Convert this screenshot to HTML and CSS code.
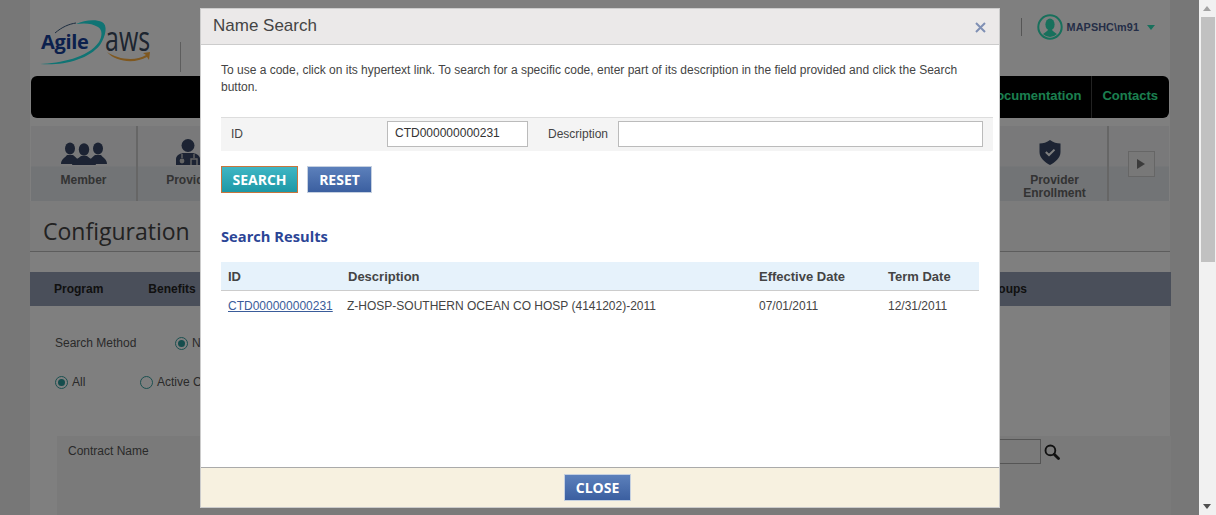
FILE: index.html
```html
<!DOCTYPE html>
<html lang="en">
<head>
    <meta charset="UTF-8">
    <title>Configuration - Name Search</title>
    <link rel="stylesheet" href="styles.css">
</head>
<body>
    <div class="window">
        <div class="page">
            <div class="top-bar">
                <div class="logo">
                    <svg class="logo-swoosh" width="74" height="50" viewBox="0 0 74 50">
                        <path d="M4 48 C24 47 52 42 63 26 C66 21 67 14 62 11 C56 7 48 7 40 8 C48 4 60 3 66 6 C72 9 70 20 64 29 C52 44 26 50 4 48 Z" fill="#20e8e8"/>
                        <path d="M19 17 C26 11 33 8 40 7" stroke="#3a5a80" stroke-width="1" fill="none"/>
                    </svg>
                    <span class="logo-agile">Agile</span>
                    <span class="logo-aws">aws</span>
                    <svg class="logo-smile" width="46" height="14" viewBox="0 0 46 14">
                        <path d="M2 2 C12 9 30 12 41 5 L38 3 L45 2 L44 10 L42 7 C30 14 10 12 2 2 Z" fill="#ffb040"/>
                    </svg>
                </div>
                <div class="logo-divider"></div>
                <div class="user-box">
                    <div class="user-divider"></div>
                    <svg class="user-icon" width="26" height="26" viewBox="0 0 26 26">
                        <clipPath id="userClip"><circle cx="13" cy="13" r="10"/></clipPath>
                        <circle cx="13" cy="13" r="11.7" fill="none" stroke="#30e0b8" stroke-width="2"/>
                        <g clip-path="url(#userClip)" fill="#30e0b8">
                            <ellipse cx="13" cy="10.5" rx="4.6" ry="6"/>
                            <path d="M3 26 C4 19 9 19 11 16 L15 16 C17 19 22 19 23 26 Z"/>
                        </g>
                    </svg>
                    <span class="user-name">MAPSHC\m91</span>
                    <span class="user-caret"></span>
                </div>
            </div>

            <nav class="main-nav">
                <a class="main-link">Documentation</a>
                <a class="main-link">Contacts</a>
            </nav>

            <div class="tabs">
                <div class="tab">
                    <div class="tab-icon">
                        <svg width="46" height="24" viewBox="0 0 46 24" fill="#384766">
                            <ellipse cx="9" cy="6.5" rx="5" ry="6"/>
                            <path d="M0 22 C0 17 4 16 6 13 L12 13 C14 15 16 16 17 18 L14 22 Z"/>
                            <ellipse cx="37" cy="6.5" rx="5" ry="6"/>
                            <path d="M46 22 C46 17 42 16 40 13 L34 13 C32 15 30 16 29 18 L32 22 Z"/>
                            <ellipse cx="23" cy="7.5" rx="5.2" ry="6.2"/>
                            <path d="M11 23 C12 18 17 17 20 14 L26 14 C29 17 34 18 35 23 Z"/>
                        </svg>
                    </div>
                    <div class="tab-label">Member</div>
                </div>
                <div class="tab tab-provider">
                    <div class="tab-icon">
                        <svg width="26" height="27" viewBox="0 0 26 27" fill="#384766">
                            <circle cx="13" cy="6.5" r="6.5"/>
                            <path d="M1 26 L1 20 C1 16 6 14 9 14 L17 14 C20 14 25 16 25 20 L25 26 Z"/>
                            <path d="M7 15 L7 19 M19 15 L19 19 M16 26 L16 20 L22 20 L22 26" stroke="#c8c8c8" stroke-width="1.4" fill="none"/>
                            <circle cx="7" cy="22" r="2.4" fill="#c8c8c8"/>
                        </svg>
                    </div>
                    <div class="tab-label">Provider</div>
                </div>
                <div class="tab-fill"></div>
                <div class="tab tab-enroll">
                    <div class="tab-icon">
                        <svg width="22" height="25" viewBox="0 0 22 25">
                            <path d="M11 0 C14 2.5 18 3.5 21.5 3.5 L21.5 12 C21.5 18 16 22.5 11 25 C6 22.5 0.5 18 0.5 12 L0.5 3.5 C4 3.5 8 2.5 11 0 Z" fill="#384766"/>
                            <path d="M6.8 12 L10 15 L15.5 9.6" stroke="#fff" stroke-width="2" fill="none"/>
                        </svg>
                    </div>
                    <div class="tab-label">Provider Enrollment</div>
                </div>
                <div class="tab-arrow">
                    <button class="arrow-btn"><span class="arrow-shape"></span></button>
                </div>
            </div>

            <div class="title-band">
                <h1>Configuration</h1>
            </div>

            <div class="sub-nav">
                <a>Program</a>
                <a>Benefits</a>
                <span class="sub-nav-end">Groups</span>
            </div>

            <div class="search-method">
                <span class="method-label">Search Method</span>
                <label class="radio-item"><span class="radio checked"></span>Name</label>
            </div>
            <div class="status-row">
                <label class="radio-item status-all"><span class="radio checked"></span>All</label>
                <label class="radio-item"><span class="radio"></span>Active Contracts</label>
            </div>

            <div class="contract-panel">
                <span class="contract-label">Contract Name</span>
                <div class="contract-search">
                    <div class="contract-input"></div>
                    <svg width="16" height="16" viewBox="0 0 17 17">
                        <circle cx="6.8" cy="6.8" r="5.2" fill="none" stroke="#222" stroke-width="2"/>
                        <path d="M10.8 10.8 L15.4 15.4" stroke="#222" stroke-width="3" stroke-linecap="round"/>
                    </svg>
                </div>
            </div>
        </div>
        <div class="overlay"></div>

        <div class="modal">
            <div class="modal-head">
                <span class="modal-title">Name Search</span>
                <svg class="modal-close" width="11" height="11" viewBox="0 0 11 11">
                    <path d="M1 1 L10 10 M10 1 L1 10" stroke="#7f90b4" stroke-width="2"/>
                </svg>
            </div>
            <div class="modal-body">
                <p class="hint">To use a code, click on its hypertext link. To search for a specific code, enter part of its description in the field provided and click the Search button.</p>
                <div class="filter-row">
                    <span class="filter-id">ID</span>
                    <input class="field field-id" type="text" value="CTD000000000231">
                    <span class="filter-desc">Description</span>
                    <input class="field field-desc" type="text">
                </div>
                <div class="btn-row">
                    <button class="btn btn-search">SEARCH</button>
                    <button class="btn btn-blue">RESET</button>
                </div>
                <h2 class="results-title">Search Results</h2>
                <table class="results">
                    <thead>
                        <tr>
                            <th class="col-id">ID</th>
                            <th class="col-desc">Description</th>
                            <th class="col-eff">Effective Date</th>
                            <th class="col-term">Term Date</th>
                        </tr>
                    </thead>
                    <tbody>
                        <tr>
                            <td><a href="#">CTD000000000231</a></td>
                            <td class="cell-desc">Z-HOSP-SOUTHERN OCEAN CO HOSP (4141202)-2011</td>
                            <td>07/01/2011</td>
                            <td>12/31/2011</td>
                        </tr>
                    </tbody>
                </table>
            </div>
            <div class="modal-foot">
                <button class="btn btn-blue btn-close">CLOSE</button>
            </div>
        </div>

        <div class="scrollbar">
            <div class="scroll-up"></div>
            <div class="scroll-thumb"></div>
            <div class="scroll-down"></div>
        </div>
    </div>
</body>
</html>
```

FILE: styles.css
```css
html, body {
    margin: 0;
    height: 100%;
    overflow: hidden;
}
body {
    font-family: "Liberation Sans", Arial, sans-serif;
    font-size: 12px;
    color: #333;
}
.window {
    position: relative;
    height: 515px;
    overflow: hidden;
}
.page {
    width: 1199px;
    height: 515px;
    box-sizing: border-box;
    margin-right: 17px;
    padding: 0 29px 0 30px;
    background-color: #eee;
    overflow: hidden;
    background-image: linear-gradient(#fff, #fff);
    background-size: 1140px 100%;
    background-position: 30px 0;
    background-repeat: no-repeat;
}
.overlay {
    position: absolute;
    left: 0;
    top: 0;
    width: 1199px;
    height: 515px;
    background-color: rgba(0, 0, 0, 0.5);
}

/* header */
.top-bar {
    height: 76px;
    display: flex;
    align-items: flex-start;
}
.logo {
    position: relative;
    width: 150px;
    height: 76px;
}
.logo-swoosh {
    position: absolute;
    left: 6px;
    top: 16px;
}
.logo-agile {
    position: absolute;
    left: 11px;
    top: 28px;
    font-family: "Open Sans", sans-serif;
    font-size: 20px;
    font-weight: 700;
    letter-spacing: -0.3px;
    color: #16409a;
}
.logo-aws {
    position: absolute;
    left: 75px;
    top: 20px;
    font-family: "Open Sans", sans-serif;
    font-size: 25px;
    color: #3a4a60;
    transform: scaleY(1.35);
}
.logo-smile {
    position: absolute;
    left: 75px;
    top: 50px;
}
.logo-divider {
    width: 1px;
    height: 30px;
    margin-top: 42px;
    background-color: #bbb;
}
.user-box {
    margin-left: auto;
    margin-top: 14px;
    padding-right: 15px;
    display: flex;
    align-items: center;
    height: 26px;
}
.user-divider {
    width: 1px;
    height: 18px;
    margin-right: 15px;
    background-color: #aaa;
}
.user-name {
    margin-left: 4px;
    font-size: 10.8px;
    font-weight: 700;
    letter-spacing: 0.1px;
    color: #4a5c90;
}
.user-caret {
    margin-left: 8px;
    border-left: 4.5px solid transparent;
    border-right: 4.5px solid transparent;
    border-top: 5px solid #30e0b8;
}

/* black menu */
.main-nav {
    height: 42px;
    margin: 0 1px;
    padding-right: 1px;
    display: flex;
    justify-content: flex-end;
    background-color: #000;
    border-radius: 6px;
}
.main-link {
    height: 42px;
    line-height: 39px;
    padding: 0 10px;
    font-size: 13px;
    font-weight: 700;
    color: #36ffa0;
}
.main-link + .main-link {
    border-left: 1px solid #444;
}

/* icon tabs */
.tabs {
    display: flex;
    height: 75px;
    margin: 8px 1px 0;
    background: linear-gradient(#f2f3f4 0, #f2f3f4 40px, #e4e8ec 41px, #e4e8ec 100%);
}
.tab {
    width: 105px;
    border-right: 2px solid #ccc;
    text-align: center;
}
.tab-provider {
    border-right: none;
}
.tab-fill {
    flex: 1;
}
.tab-icon {
    height: 41px;
    display: flex;
    align-items: flex-end;
    justify-content: center;
    padding-bottom: 1px;
    box-sizing: border-box;
}
.tab-provider .tab-icon {
    padding-right: 6px;
}
.tab-enroll .tab-icon {
    padding: 0 10px 2px 0;
}
.tab-label {
    padding-top: 7px;
    font-size: 12px;
    line-height: 13px;
    font-weight: 700;
    color: #666;
}
.tab-enroll .tab-label {
    width: 70px;
    margin: 0 auto;
}
.tab-arrow {
    width: 60px;
    display: flex;
    justify-content: flex-end;
}
.arrow-btn {
    width: 27px;
    height: 26px;
    margin: 25px 14px 0 0;
    padding: 0;
    border: 1px solid #ccc;
    background-color: #f0f0f0;
}
.arrow-shape {
    display: block;
    width: 0;
    margin-left: 8px;
    border-top: 5.5px solid transparent;
    border-bottom: 5.5px solid transparent;
    border-left: 8px solid #777;
}

/* page title */
.title-band {
    height: 51px;
    box-sizing: border-box;
    border-bottom: 1px solid #bbb;
    background-color: #f8f8f8;
}
h1 {
    margin: 0;
    padding: 14px 0 0 13px;
    font-family: "Open Sans", sans-serif;
    font-size: 23px;
    line-height: 32px;
    font-weight: 400;
    color: #444;
}
.sub-nav {
    display: flex;
    height: 34px;
    margin: 20px -1px 0 0;
    padding-left: 24px;
    background-color: #959fb4;
    align-items: center;
    font-weight: 700;
    color: #222;
}
.sub-nav a {
    margin-right: 45px;
}
.sub-nav-end {
    margin-left: auto;
    margin-right: 144px;
}

/* search form behind the dialog */
.search-method {
    display: flex;
    margin-top: 30px;
    padding-left: 25px;
    height: 15px;
    line-height: 15px;
}
.method-label {
    width: 120px;
    color: #555;
}
.status-row {
    display: flex;
    margin-top: 24px;
    padding-left: 25px;
    height: 15px;
    line-height: 15px;
}
.status-all {
    width: 85px;
}
.radio-item {
    display: flex;
    align-items: center;
    color: #555;
}
.radio {
    position: relative;
    width: 11px;
    height: 11px;
    margin-right: 4px;
    border: 1px solid #35a0a0;
    border-radius: 50%;
}
.radio.checked::after {
    content: "";
    position: absolute;
    left: 2px;
    top: 2px;
    width: 7px;
    height: 7px;
    border-radius: 50%;
    background-color: #2a9a9a;
}
.contract-panel {
    display: flex;
    justify-content: space-between;
    height: 90px;
    margin: 46px -1px 0 27px;
    padding: 8px 111px 0 11px;
    background-color: #f5f5f5;
}
.contract-label {
    color: #555;
}
.contract-search {
    display: flex;
    align-items: flex-start;
    margin-top: -5px;
}
.contract-input {
    width: 40px;
    height: 23px;
    border: 1px solid #aaa;
    margin-right: 3px;
}
.contract-search svg {
    margin-top: 5px;
}

/* dialog */
.modal {
    position: absolute;
    left: 200px;
    top: 8px;
    width: 800px;
    height: 500px;
    box-sizing: border-box;
    border: 1px solid #ccc;
    display: flex;
    flex-direction: column;
    background-color: #fff;
}
.modal-head {
    display: flex;
    justify-content: space-between;
    align-items: center;
    height: 36px;
    box-sizing: border-box;
    padding: 0 13px 0 12px;
    background-color: #ebe9e9;
    border-bottom: 1px solid #ccc;
}
.modal-title {
    font-size: 17px;
    color: #444;
    padding-bottom: 2px;
}
.modal-close {
    margin-top: 2px;
}
.modal-body {
    flex: 1;
    padding: 0 20px;
    overflow: hidden;
}
.hint {
    margin: 17px 0 0;
    line-height: 17px;
    color: #444;
}
.filter-row {
    display: flex;
    align-items: center;
    width: 772px;
    height: 34px;
    box-sizing: border-box;
    margin-top: 21px;
    padding-bottom: 1px;
    border-top: 1px solid #ddd;
    background-color: #f4f4f4;
    color: #444;
}
.filter-id {
    width: 166px;
    padding-left: 10px;
    box-sizing: border-box;
}
.filter-desc {
    width: 90px;
    text-align: right;
    padding-right: 10px;
    box-sizing: border-box;
}
.field {
    height: 26px;
    box-sizing: border-box;
    padding: 0 7px 2px;
    border: 1px solid #bbb;
    background-color: #fff;
    font-family: "Liberation Sans", Arial, sans-serif;
    font-size: 12px;
    color: #333;
}
.field-id {
    width: 141px;
}
.field-desc {
    width: 365px;
}
.btn-row {
    display: flex;
    gap: 9px;
    margin-top: 15px;
}
.btn {
    height: 27px;
    padding: 0;
    box-sizing: border-box;
    font-family: "Open Sans", sans-serif;
    font-size: 14px;
    font-weight: 700;
    color: #fff;
    cursor: pointer;
}
.btn-search {
    width: 77px;
    border: 1px solid #c8753c;
    background: linear-gradient(#3fb6c4, #1d98a6);
}
.btn-blue {
    width: 65px;
    border: 1px solid #c5d0e0;
    background: linear-gradient(#5c80bb, #3b5fa0);
}
.results-title {
    margin: 33px 0 0;
    font-family: "Open Sans", sans-serif;
    font-size: 14.7px;
    line-height: 20px;
    font-weight: 700;
    color: #2b4596;
}
.results {
    width: 758px;
    margin-top: 16px;
    border-collapse: collapse;
    table-layout: fixed;
}
.results th {
    box-sizing: border-box;
    height: 28px;
    padding: 1px 0 0 7px;
    text-align: left;
    font-size: 13px;
    font-weight: 700;
    color: #444;
    background-color: #e6f2fb;
    border-bottom: 1px solid #ccc;
}
.results td {
    height: 30px;
    padding: 0 0 0 7px;
    color: #444;
}
.results a {
    color: #3a5c9a;
}
.results .cell-desc {
    padding-left: 6px;
}
.col-id { width: 120px; }
.col-desc { width: 411px; }
.col-eff { width: 129px; }
.col-term { width: 98px; }
.modal-foot {
    height: 40px;
    box-sizing: border-box;
    padding-top: 6px;
    text-align: center;
    background-color: #f7f1e0;
    border-top: 1px solid #aaa;
}
.btn-close {
    width: 67px;
    height: 27px;
    margin-left: -5px;
}

/* scrollbar */
.scrollbar {
    position: absolute;
    right: 0;
    top: 0;
    width: 17px;
    height: 515px;
    background-color: #f1f1f1;
    display: flex;
    flex-direction: column;
}
.scroll-up {
    height: 17px;
    position: relative;
}
.scroll-up::after {
    content: "";
    position: absolute;
    left: 4px;
    top: 6px;
    border-left: 4px solid transparent;
    border-right: 4px solid transparent;
    border-bottom: 5px solid #a3a3a3;
}
.scroll-thumb {
    height: 245px;
    margin: 0 1px 0 2px;
    background-color: #c1c1c1;
}
.scroll-down {
    margin-top: auto;
    height: 17px;
    position: relative;
}
.scroll-down::after {
    content: "";
    position: absolute;
    left: 4px;
    top: 6px;
    border-left: 4px solid transparent;
    border-right: 4px solid transparent;
    border-top: 5px solid #505050;
}
```
